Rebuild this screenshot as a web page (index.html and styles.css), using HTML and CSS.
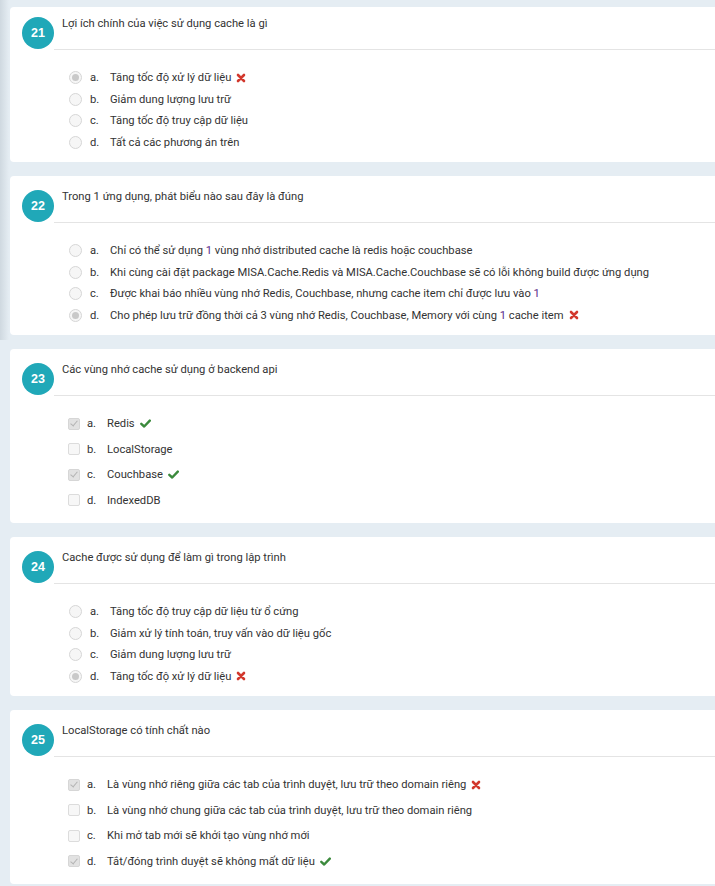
FILE: index.html
```html
<!DOCTYPE html>
<html lang="vi">
<head>
<meta charset="utf-8">
<title>Quiz</title>
<link rel="stylesheet" href="styles.css">
</head>
<body>
<svg width="0" height="0" class="defs" aria-hidden="true">
  <defs>
    <symbol id="ic-x" viewBox="0 0 10 10">
      <path d="M2 2 L8 8 M8 2 L2 8" stroke="currentColor" stroke-width="2.6" stroke-linecap="round" fill="none"/>
    </symbol>
    <symbol id="ic-check" viewBox="0 0 11 9">
      <path d="M1.3 4.8 L4.2 7.5 L9.8 1.6" stroke="currentColor" stroke-width="2.4" stroke-linecap="round" stroke-linejoin="round" fill="none"/>
    </symbol>
  </defs>
</svg>
<main class="quiz">

  <section class="card">
    <div class="q-head">
      <div class="badge">21</div>
      <div class="q-body">Lợi ích chính của việc sử dụng cache là gì</div>
    </div>
    <ul class="options options-radio">
      <li class="opt"><span class="radio checked"></span><span class="letter">a.</span><span class="txt">Tăng tốc độ xử lý dữ liệu</span><svg class="mark wrong"><use href="#ic-x"/></svg></li>
      <li class="opt"><span class="radio"></span><span class="letter">b.</span><span class="txt">Giảm dung lượng lưu trữ</span></li>
      <li class="opt"><span class="radio"></span><span class="letter">c.</span><span class="txt">Tăng tốc độ truy cập dữ liệu</span></li>
      <li class="opt"><span class="radio"></span><span class="letter">d.</span><span class="txt">Tất cả các phương án trên</span></li>
    </ul>
  </section>

  <section class="card">
    <div class="q-head">
      <div class="badge">22</div>
      <div class="q-body">Trong 1 ứng dụng, phát biểu nào sau đây là đúng</div>
    </div>
    <ul class="options options-radio">
      <li class="opt"><span class="radio"></span><span class="letter">a.</span><span class="txt">Chỉ có thể sử dụng <span class="num">1</span> vùng nhớ distributed cache là redis hoặc couchbase</span></li>
      <li class="opt"><span class="radio"></span><span class="letter">b.</span><span class="txt">Khi cùng cài đặt package MISA.Cache.Redis và MISA.Cache.Couchbase sẽ có lỗi không build được ứng dụng</span></li>
      <li class="opt"><span class="radio"></span><span class="letter">c.</span><span class="txt">Được khai báo nhiều vùng nhớ Redis, Couchbase, nhưng cache item chỉ được lưu vào <span class="num">1</span></span></li>
      <li class="opt"><span class="radio checked"></span><span class="letter">d.</span><span class="txt">Cho phép lưu trữ đồng thời cả 3 vùng nhớ Redis, Couchbase, Memory với cùng <span class="num">1</span> cache item</span><svg class="mark wrong"><use href="#ic-x"/></svg></li>
    </ul>
  </section>

  <section class="card">
    <div class="q-head">
      <div class="badge">23</div>
      <div class="q-body">Các vùng nhớ cache sử dụng ở backend api</div>
    </div>
    <ul class="options options-check">
      <li class="opt"><span class="checkbox checked"></span><span class="letter">a.</span><span class="txt">Redis</span><svg class="mark right"><use href="#ic-check"/></svg></li>
      <li class="opt"><span class="checkbox"></span><span class="letter">b.</span><span class="txt">LocalStorage</span></li>
      <li class="opt"><span class="checkbox checked"></span><span class="letter">c.</span><span class="txt">Couchbase</span><svg class="mark right"><use href="#ic-check"/></svg></li>
      <li class="opt"><span class="checkbox"></span><span class="letter">d.</span><span class="txt">IndexedDB</span></li>
    </ul>
  </section>

  <section class="card">
    <div class="q-head">
      <div class="badge">24</div>
      <div class="q-body">Cache được sử dụng để làm gì trong lập trình</div>
    </div>
    <ul class="options options-radio">
      <li class="opt"><span class="radio"></span><span class="letter">a.</span><span class="txt">Tăng tốc độ truy cập dữ liệu từ ổ cứng</span></li>
      <li class="opt"><span class="radio"></span><span class="letter">b.</span><span class="txt">Giảm xử lý tính toán, truy vấn vào dữ liệu gốc</span></li>
      <li class="opt"><span class="radio"></span><span class="letter">c.</span><span class="txt">Giảm dung lượng lưu trữ</span></li>
      <li class="opt"><span class="radio checked"></span><span class="letter">d.</span><span class="txt">Tăng tốc độ xử lý dữ liệu</span><svg class="mark wrong"><use href="#ic-x"/></svg></li>
    </ul>
  </section>

  <section class="card">
    <div class="q-head">
      <div class="badge">25</div>
      <div class="q-body">LocalStorage có tính chất nào</div>
    </div>
    <ul class="options options-check">
      <li class="opt"><span class="checkbox checked"></span><span class="letter">a.</span><span class="txt">Là vùng nhớ riêng giữa các tab của trình duyệt, lưu trữ theo domain riêng</span><svg class="mark wrong"><use href="#ic-x"/></svg></li>
      <li class="opt"><span class="checkbox"></span><span class="letter">b.</span><span class="txt">Là vùng nhớ chung giữa các tab của trình duyệt, lưu trữ theo domain riêng</span></li>
      <li class="opt"><span class="checkbox"></span><span class="letter">c.</span><span class="txt">Khi mở tab mới sẽ khởi tạo vùng nhớ mới</span></li>
      <li class="opt"><span class="checkbox checked"></span><span class="letter">d.</span><span class="txt">Tắt/đóng trình duyệt sẽ không mất dữ liệu</span><svg class="mark right"><use href="#ic-check"/></svg></li>
    </ul>
  </section>

</main>
</body>
</html>
```
FILE: styles.css
```css
html, body {
  margin: 0;
  padding: 0;
  overflow: hidden;
}

body {
  background-color: #e5edf3;
  background-image: linear-gradient(to right, rgba(60, 80, 95, 0.13), rgba(60, 80, 95, 0) 9px);
  background-size: 10px 340px;
  background-repeat: no-repeat;
  font-family: Roboto, "Liberation Sans", Arial, sans-serif;
  font-size: 11.2px;
  color: #333;
  width: 715px;
  height: 886px;
}

.defs {
  position: absolute;
  width: 0;
  height: 0;
}

.quiz {
  display: flex;
  flex-direction: column;
  gap: 14px;
  padding: 7px 0 0 10px;
  margin-right: -20px;
}

.card {
  background: #fff;
  border-radius: 4px;
}

.q-head {
  display: flex;
  padding-left: 12px;
}

.badge {
  flex: none;
  width: 32px;
  height: 32px;
  margin-top: 14px;
  border-radius: 50%;
  background: #20a8b8;
  color: #fff;
  font-family: "Liberation Sans", Arial, sans-serif;
  font-weight: bold;
  font-size: 12.5px;
  display: flex;
  align-items: center;
  justify-content: center;
}

.q-body {
  flex: 1;
  box-sizing: border-box;
  height: 47px;
  padding: 13px 0 0 8px;
  line-height: 16px;
  border-bottom: 1px solid #e4e4e4;
  color: #333;
}

.card:first-child .badge {
  margin-top: 10px;
}

.card:first-child .q-body {
  height: 43px;
  padding-top: 9px;
}

.options {
  list-style: none;
  margin: 0;
  padding: 17px 0 9px 58px;
}

.options-check {
  padding-top: 15px;
  padding-bottom: 10px;
}

.opt {
  display: flex;
  align-items: center;
  height: 21.5px;
  color: #333;
}

.options-check .opt {
  height: 25.5px;
}

.radio {
  flex: none;
  box-sizing: border-box;
  width: 13px;
  height: 13px;
  margin-left: 1px;
  margin-right: 8px;
  border-radius: 50%;
  border: 1px solid #d6d6d6;
  background: #f6f6f6;
  display: flex;
  align-items: center;
  justify-content: center;
}

.radio.checked::after {
  content: "";
  width: 7px;
  height: 7px;
  border-radius: 50%;
  background: #c9c9c9;
}

.checkbox {
  flex: none;
  box-sizing: border-box;
  width: 12px;
  height: 12px;
  margin-right: 7px;
  border-radius: 2px;
  border: 1px solid #dcdcdc;
  background: #f7f7f7;
  display: flex;
  align-items: center;
  justify-content: center;
}

.checkbox.checked {
  background: #e2e2e2;
  border-color: #d6d6d6;
}

.checkbox.checked::after {
  content: "";
  width: 3px;
  height: 6px;
  margin-top: -2px;
  border: solid #b4b4b4;
  border-width: 0 1.5px 1.5px 0;
  transform: rotate(40deg);
}

.letter {
  flex: none;
  width: 20px;
}

.txt {
  white-space: nowrap;
}

.num {
  color: #5c2b8a;
}

.mark {
  flex: none;
  margin-left: 5px;
}

.mark.wrong {
  width: 10px;
  height: 10px;
  color: #d2382d;
}

.mark.right {
  width: 11px;
  height: 9px;
  color: #3b8a3c;
}
```
